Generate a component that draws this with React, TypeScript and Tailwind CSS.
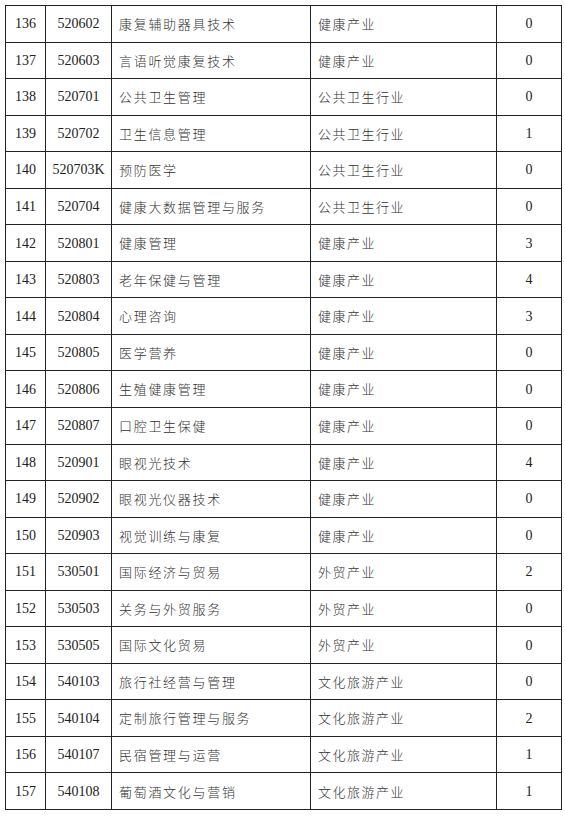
const rows: [string, string, string, string, string][] = [
  ['136', '520602', '康复辅助器具技术', '健康产业', '0'],
  ['137', '520603', '言语听觉康复技术', '健康产业', '0'],
  ['138', '520701', '公共卫生管理', '公共卫生行业', '0'],
  ['139', '520702', '卫生信息管理', '公共卫生行业', '1'],
  ['140', '520703K', '预防医学', '公共卫生行业', '0'],
  ['141', '520704', '健康大数据管理与服务', '公共卫生行业', '0'],
  ['142', '520801', '健康管理', '健康产业', '3'],
  ['143', '520803', '老年保健与管理', '健康产业', '4'],
  ['144', '520804', '心理咨询', '健康产业', '3'],
  ['145', '520805', '医学营养', '健康产业', '0'],
  ['146', '520806', '生殖健康管理', '健康产业', '0'],
  ['147', '520807', '口腔卫生保健', '健康产业', '0'],
  ['148', '520901', '眼视光技术', '健康产业', '4'],
  ['149', '520902', '眼视光仪器技术', '健康产业', '0'],
  ['150', '520903', '视觉训练与康复', '健康产业', '0'],
  ['151', '530501', '国际经济与贸易', '外贸产业', '2'],
  ['152', '530503', '关务与外贸服务', '外贸产业', '0'],
  ['153', '530505', '国际文化贸易', '外贸产业', '0'],
  ['154', '540103', '旅行社经营与管理', '文化旅游产业', '0'],
  ['155', '540104', '定制旅行管理与服务', '文化旅游产业', '2'],
  ['156', '540107', '民宿管理与运营', '文化旅游产业', '1'],
  ['157', '540108', '葡萄酒文化与营销', '文化旅游产业', '1'],
]

export default function App() {
  return (
    <div className="w-[565px] h-[816px] bg-white pt-[5px] pl-[5px] font-['Liberation_Serif','Noto_Sans_CJK_SC',serif]">
      <table className="table-fixed border-collapse w-[556px] text-[14px] text-[#222]">
        <colgroup>
          <col className="w-[40px]" />
          <col className="w-[66px]" />
          <col className="w-[199px]" />
          <col className="w-[186px]" />
          <col className="w-[65px]" />
        </colgroup>
        <tbody>
          {rows.map((r) => (
            <tr key={r[0]} className="h-[36.55px]">
              <td className="border border-[#222] text-center p-0">{r[0]}</td>
              <td className="border border-[#222] text-center p-0">{r[1]}</td>
              <td className="border border-[#222] pl-[7px] p-0 text-[13px] tracking-[1.7px] text-[#333] font-['Noto_Sans_CJK_SC',sans-serif] font-light">
                {r[2]}
              </td>
              <td className="border border-[#222] pl-[7px] p-0 text-[13px] tracking-[1.5px] text-[#333] font-['Noto_Sans_CJK_SC',sans-serif] font-light">
                {r[3]}
              </td>
              <td className="border border-[#222] text-center p-0">{r[4]}</td>
            </tr>
          ))}
        </tbody>
      </table>
    </div>
  )
}
